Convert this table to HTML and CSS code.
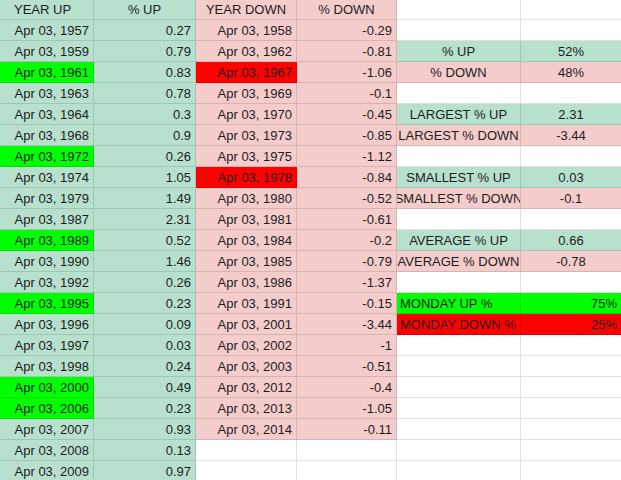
FILE: index.html
```html
<!DOCTYPE html>
<html>
<head>
<meta charset="utf-8">
<link rel="stylesheet" href="styles.css">
</head>
<body>
<div class="sheet">
  <div class="c g hd hl">YEAR UP</div><div class="c g hd">% UP</div><div class="c p hd">YEAR DOWN</div><div class="c p hd">% DOWN</div><div class="c"></div><div class="c"></div>

  <div class="c g r">Apr 03, 1957</div><div class="c g r">0.27</div><div class="c p r">Apr 03, 1958</div><div class="c p r">-0.29</div><div class="c"></div><div class="c"></div>
  <div class="c g r">Apr 03, 1959</div><div class="c g r">0.79</div><div class="c p r">Apr 03, 1962</div><div class="c p r">-0.81</div><div class="c g m">% UP</div><div class="c g m">52%</div>
  <div class="c bg r">Apr 03, 1961</div><div class="c g r">0.83</div><div class="c br r">Apr 03, 1967</div><div class="c p r">-1.06</div><div class="c p m">% DOWN</div><div class="c p m">48%</div>
  <div class="c g r">Apr 03, 1963</div><div class="c g r">0.78</div><div class="c p r">Apr 03, 1969</div><div class="c p r">-0.1</div><div class="c"></div><div class="c"></div>
  <div class="c g r">Apr 03, 1964</div><div class="c g r">0.3</div><div class="c p r">Apr 03, 1970</div><div class="c p r">-0.45</div><div class="c g m">LARGEST % UP</div><div class="c g m">2.31</div>
  <div class="c g r">Apr 03, 1968</div><div class="c g r">0.9</div><div class="c p r">Apr 03, 1973</div><div class="c p r">-0.85</div><div class="c p m">LARGEST % DOWN</div><div class="c p m">-3.44</div>
  <div class="c bg r">Apr 03, 1972</div><div class="c g r">0.26</div><div class="c p r">Apr 03, 1975</div><div class="c p r">-1.12</div><div class="c"></div><div class="c"></div>
  <div class="c g r">Apr 03, 1974</div><div class="c g r">1.05</div><div class="c br r">Apr 03, 1978</div><div class="c p r">-0.84</div><div class="c g m">SMALLEST % UP</div><div class="c g m">0.03</div>
  <div class="c g r">Apr 03, 1979</div><div class="c g r">1.49</div><div class="c p r">Apr 03, 1980</div><div class="c p r">-0.52</div><div class="c p m">SMALLEST % DOWN</div><div class="c p m">-0.1</div>
  <div class="c g r">Apr 03, 1987</div><div class="c g r">2.31</div><div class="c p r">Apr 03, 1981</div><div class="c p r">-0.61</div><div class="c"></div><div class="c"></div>
  <div class="c bg r">Apr 03, 1989</div><div class="c g r">0.52</div><div class="c p r">Apr 03, 1984</div><div class="c p r">-0.2</div><div class="c g m">AVERAGE % UP</div><div class="c g m">0.66</div>
  <div class="c g r">Apr 03, 1990</div><div class="c g r">1.46</div><div class="c p r">Apr 03, 1985</div><div class="c p r">-0.79</div><div class="c p m">AVERAGE % DOWN</div><div class="c p m">-0.78</div>
  <div class="c g r">Apr 03, 1992</div><div class="c g r">0.26</div><div class="c p r">Apr 03, 1986</div><div class="c p r">-1.37</div><div class="c"></div><div class="c"></div>
  <div class="c bg r">Apr 03, 1995</div><div class="c g r">0.23</div><div class="c p r">Apr 03, 1991</div><div class="c p r">-0.15</div><div class="c bg l">MONDAY UP %</div><div class="c bg r">75%</div>
  <div class="c g r">Apr 03, 1996</div><div class="c g r">0.09</div><div class="c p r">Apr 03, 2001</div><div class="c p r">-3.44</div><div class="c br l">MONDAY DOWN %</div><div class="c br r">25%</div>
  <div class="c g r">Apr 03, 1997</div><div class="c g r">0.03</div><div class="c p r">Apr 03, 2002</div><div class="c p r">-1</div><div class="c"></div><div class="c"></div>
  <div class="c g r">Apr 03, 1998</div><div class="c g r">0.24</div><div class="c p r">Apr 03, 2003</div><div class="c p r">-0.51</div><div class="c"></div><div class="c"></div>
  <div class="c bg r">Apr 03, 2000</div><div class="c g r">0.49</div><div class="c p r">Apr 03, 2012</div><div class="c p r">-0.4</div><div class="c"></div><div class="c"></div>
  <div class="c bg r">Apr 03, 2006</div><div class="c g r">0.23</div><div class="c p r">Apr 03, 2013</div><div class="c p r">-1.05</div><div class="c"></div><div class="c"></div>
  <div class="c g r">Apr 03, 2007</div><div class="c g r">0.93</div><div class="c p r">Apr 03, 2014</div><div class="c p r">-0.11</div><div class="c"></div><div class="c"></div>
  <div class="c g r">Apr 03, 2008</div><div class="c g r">0.13</div><div class="c"></div><div class="c"></div><div class="c"></div><div class="c"></div>
  <div class="c g r">Apr 03, 2009</div><div class="c g r">0.97</div><div class="c"></div><div class="c"></div><div class="c"></div><div class="c"></div>
</div>
</body>
</html>
```

FILE: styles.css
```css
html, body {
  margin: 0;
  padding: 0;
  background: #ffffff;
  overflow: hidden;
}

.sheet {
  display: grid;
  grid-template-columns: 94px 102px 101px 100px 124px 101px;
  grid-template-rows: 20px;
  grid-auto-rows: 21px;
  font-family: "Liberation Sans", Arial, sans-serif;
  font-size: 13px;
  color: #1c1c1c;
}

.c {
  box-sizing: border-box;
  border-right: 1px solid rgba(0, 0, 0, 0.12);
  border-bottom: 1px solid rgba(0, 0, 0, 0.12);
  display: flex;
  align-items: flex-end;
  padding: 0 3px 2px 3px;
  line-height: 15px;
  white-space: nowrap;
  overflow: hidden;
}

.g { background: #b7e1cd; }
.p { background: #f4cccc; }
.bg { background: #00ff00; }
.br { background: #ff0000; }

.r { justify-content: flex-end; padding-right: 4px; }
.l { justify-content: flex-start; }
.m { justify-content: center; padding-left: 0; padding-right: 0; }
.hd { justify-content: center; }
.hl { justify-content: flex-start; padding-left: 14px; }
```
